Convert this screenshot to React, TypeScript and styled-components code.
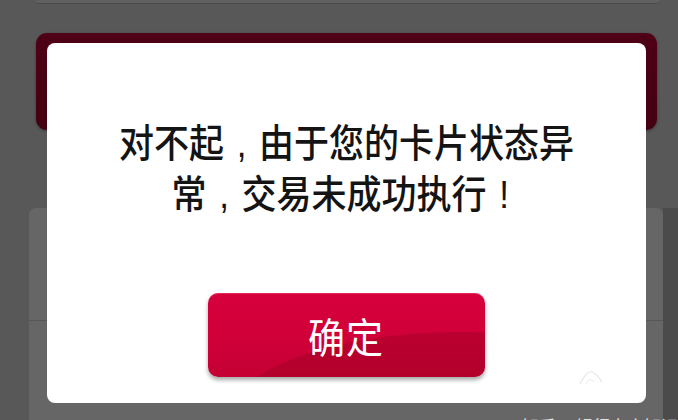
import React from "react";
import styled, { createGlobalStyle } from "styled-components";

const Global = createGlobalStyle`
  html, body { margin: 0; padding: 0; }
  body {
    width: 678px;
    height: 420px;
    overflow: hidden;
    background: #585858;
    font-family: "Noto Sans CJK SC", sans-serif;
  }
`;

const Page = styled.div`
  position: relative;
  width: 678px;
  height: 420px;
  overflow: hidden;
  background: #585858;
  display: flex;
  flex-direction: column;
`;

const TopCard = styled.div`
  margin: 0 18px 0 35px;
  height: 3px;
  background: #616161;
  border-bottom: 1px solid #4c4c4c;
  border-radius: 0 0 6px 6px;
`;

const RedBar = styled.div`
  margin: 29px 21px 0 36px;
  height: 97px;
  background: linear-gradient(180deg, #4f0016 0%, #440010 100%);
  border-radius: 11px;
  box-shadow: 0 1px 3px rgba(0, 0, 0, 0.35);
`;

const LowerRow = styled.div`
  margin-top: 78px;
  flex: 1;
  display: flex;
`;

const LeftGap = styled.div`
  width: 29px;
`;

const LowerPanel = styled.div`
  width: 634px;
  background: #666666;
  border-radius: 7px 7px 0 0;
  display: flex;
  flex-direction: column;
`;

const PanelRow = styled.div<{ $h: number }>`
  height: ${(p) => p.$h}px;
  border-bottom: 1px solid #575757;
`;

const RightShade = styled.div`
  flex: 1;
  background: #4b4b4b;
`;

const Dialog = styled.div`
  position: absolute;
  top: 43px;
  left: 47px;
  width: 599px;
  height: 360px;
  background: #ffffff;
  border-radius: 8px;
  display: flex;
  flex-direction: column;
  align-items: center;
`;

const Message = styled.div`
  margin-top: 77px;
  font-size: 35px;
  font-weight: 500;
  color: #141414;
  text-align: center;
  transform: scaleY(1.1);
`;

const Line = styled.div`
  height: 46px;
  line-height: 46px;
  white-space: nowrap;
`;

const Punct = styled.span`
  display: inline-block;
  width: 1em;
  line-height: 1;
  text-align: center;
  font-family: "Liberation Sans", sans-serif;
  font-weight: 400;
`;

const ConfirmButton = styled.button`
  position: relative;
  overflow: hidden;
  margin-top: 81px;
  margin-left: -1px;
  width: 277px;
  height: 84px;
  border: none;
  border-radius: 10px;
  background: linear-gradient(180deg, #d6003d 0%, #cf0038 60%, #c40033 100%);
  box-shadow: 0 3px 4px rgba(0, 0, 0, 0.35), inset 0 1px 0 rgba(255, 120, 150, 0.35);
  color: #ffffff;
  font-family: "Noto Sans CJK SC", sans-serif;
  font-size: 37px;
  padding: 0;
  display: flex;
  align-items: center;
  justify-content: center;
  cursor: pointer;

  &::after {
    content: "";
    position: absolute;
    left: 6%;
    top: 46%;
    width: 170%;
    height: 220%;
    border-radius: 50%;
    background: rgba(130, 0, 25, 0.28);
  }
`;

const ButtonLabel = styled.span`
  position: relative;
  z-index: 1;
  transform: scaleY(1.1);
  letter-spacing: 1px;
`;

const Watermark = styled.div`
  position: absolute;
  left: 522px;
  top: 413px;
  font-size: 17px;
  color: #e4e4e4;
  white-space: nowrap;
  font-family: "Noto Sans CJK SC", sans-serif;
`;

const Mark = styled.svg`
  position: absolute;
  left: 578px;
  top: 368px;
`;

export default function App() {
  return (
    <>
      <Global />
      <Page>
        <TopCard />
        <RedBar />
        <LowerRow>
          <LeftGap />
          <LowerPanel>
            <PanelRow $h={112} />
          </LowerPanel>
          <RightShade />
        </LowerRow>
        <Dialog>
          <Message>
            <Line>
              对不起<Punct>,</Punct>由于您的卡片状态异
            </Line>
            <Line>
              常<Punct>,</Punct>交易未成功执行<Punct>!</Punct>
            </Line>
          </Message>
          <ConfirmButton>
            <ButtonLabel>确定</ButtonLabel>
          </ConfirmButton>
        </Dialog>
        <Mark width="26" height="18" viewBox="0 0 26 18">
          <path d="M2 16 Q9 2 14 4 Q19 6 24 14" fill="none" stroke="#e6e6e6" strokeWidth="1.2" />
          <path d="M8 16 Q12 8 16 14" fill="none" stroke="#ececec" strokeWidth="1" />
        </Mark>
        <Watermark>知乎 @银行卡小知识</Watermark>
      </Page>
    </>
  );
}
